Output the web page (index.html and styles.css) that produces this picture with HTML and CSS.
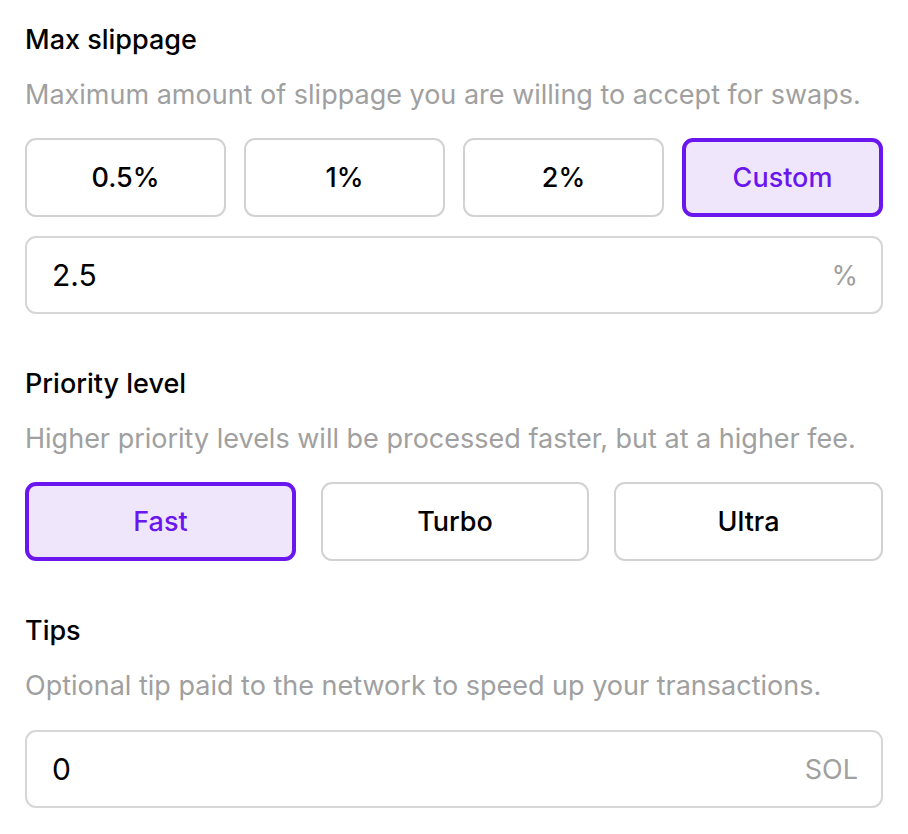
FILE: index.html
```html
<!DOCTYPE html>
<html>
<head>
<meta charset="utf-8">
<link rel="stylesheet" href="styles.css">
</head>
<body>
<div class="panel">
  <section class="section">
    <h2 class="title">Max slippage</h2>
    <p class="desc">Maximum amount of slippage you are willing to accept for swaps.</p>
    <div class="options four">
      <button class="opt">0.5%</button>
      <button class="opt">1%</button>
      <button class="opt">2%</button>
      <button class="opt active">Custom</button>
    </div>
    <div class="field"><span class="value">2.5</span><span class="unit">%</span></div>
  </section>
  <section class="section">
    <h2 class="title">Priority level</h2>
    <p class="desc">Higher priority levels will be processed faster, but at a higher fee.</p>
    <div class="options three">
      <button class="opt active">Fast</button>
      <button class="opt">Turbo</button>
      <button class="opt">Ultra</button>
    </div>
  </section>
  <section class="section">
    <h2 class="title">Tips</h2>
    <p class="desc">Optional tip paid to the network to speed up your transactions.</p>
    <div class="field tips"><span class="value">0</span><span class="unit">SOL</span></div>
  </section>
</div>
</body>
</html>
```
FILE: styles.css
```css
* { box-sizing: border-box; }
html, body { margin: 0; padding: 0; background: #fff; }
body {
  font-family: Inter, "Noto Sans", sans-serif;
  color: #000;
}
.panel {
  padding: 24px 25px;
  display: flex;
  flex-direction: column;
  gap: 54px;
}
.section {
  display: flex;
  flex-direction: column;
}
.title {
  margin: 0;
  font-size: 27px;
  font-weight: 500;
  line-height: 32px;
  color: #000;
}
.desc {
  margin: 23px 0 0;
  font-size: 27px;
  line-height: 32px;
  color: #a0a0a0;
  font-weight: 400;
}
.options {
  margin-top: 27px;
  display: grid;
}
.options.four { grid-template-columns: repeat(4, 1fr); gap: 18px; }
.options.three { grid-template-columns: 271px 268px 269px; gap: 25px; }
.opt {
  height: 79px;
  border: 2px solid #d2d2d2;
  border-radius: 11px;
  background: #fff;
  font-family: inherit;
  font-size: 27px;
  font-weight: 500;
  color: #000;
  padding: 0;
}
.opt.active {
  border: 4px solid #6a17ef;
  background: #f0e6fc;
  color: #6a17ef;
}
.field {
  margin-top: 19px;
  height: 78px;
  border: 2px solid #d6d6d6;
  border-radius: 11px;
  display: flex;
  align-items: center;
  justify-content: space-between;
  padding: 0 23px 0 25px;
}
.field.tips { margin-top: 28px; }
.value { font-size: 30px; color: #000; }
.unit { font-size: 27px; color: #a0a0a0; }
```
